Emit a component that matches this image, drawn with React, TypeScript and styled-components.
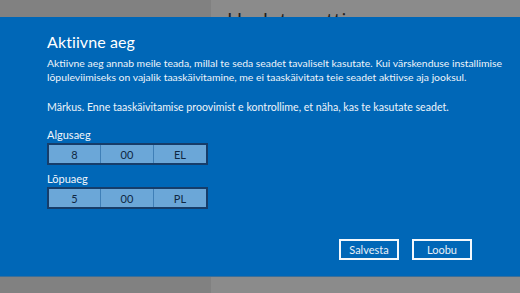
import styled, { createGlobalStyle } from 'styled-components'

const GlobalStyle = createGlobalStyle`
  html, body {
    margin: 0;
    padding: 0;
    width: 520px;
    height: 293px;
    overflow: hidden;
    font-family: Lato, 'Noto Sans', sans-serif;
  }
`

const Page = styled.div`
  width: 520px;
  height: 293px;
  display: flex;
  flex-direction: column;
`

const Strip = styled.div<{ $height?: number }>`
  display: grid;
  grid-template-columns: 211px 1fr;
  flex: ${p => (p.$height ? `0 0 ${p.$height}px` : '1 1 auto')};
  overflow: hidden;
`

const Side = styled.div`
  background: #818181;
`

const Pane = styled.div`
  background: #8b8b8b;
  padding-left: 16px;
  overflow: hidden;
`

const PaneTitle = styled.div`
  font-family: 'Open Sans', sans-serif;
  font-size: 21px;
  color: #1e1e1e;
  line-height: 1;
  margin-top: 11px;
  white-space: nowrap;
`

const Dialog = styled.div`
  flex: 0 0 260px;
  background: #0067b7;
  border-bottom: 1px solid #3a6f9a;
  box-sizing: border-box;
  padding: 14px 30px 0 47px;
  display: flex;
  flex-direction: column;
  color: #fff;
`

const Title = styled.h1`
  margin: 0;
  font-size: 16px;
  font-weight: 400;
  line-height: 22px;
  letter-spacing: 0.1px;
`

const Body = styled.p<{ $gap: number; $size: number }>`
  margin: ${p => p.$gap}px 0 0;
  font-size: ${p => p.$size}px;
  line-height: 14px;
  color: #eef4fa;
  white-space: nowrap;
`

const Field = styled.div<{ $gap: number }>`
  display: flex;
  flex-direction: column;
  margin-top: ${p => p.$gap}px;
`

const Label = styled.div`
  font-size: 11px;
  line-height: 14px;
  color: #f2f6fb;
  margin-bottom: 1px;
`

const TimeBox = styled.div`
  display: grid;
  grid-template-columns: 52px 53px 1fr;
  width: 161px;
  height: 22px;
  box-sizing: border-box;
  border: 2px solid #163d6a;
  background: #6ba7d8;
`

const TimeCell = styled.div<{ $last?: boolean }>`
  display: flex;
  align-items: center;
  justify-content: center;
  font-size: 11px;
  color: #0f2742;
  border-right: ${p => (p.$last ? 'none' : '1px solid #3f7fb7')};
`

const Actions = styled.div`
  display: flex;
  justify-content: flex-end;
  gap: 13px;
  margin-top: 30px;
  margin-right: 18px;
`

const Button = styled.button`
  width: 60px;
  height: 21px;
  box-sizing: border-box;
  border: 2px solid #f4f8fc;
  background: transparent;
  color: #e8f0f8;
  font-family: Lato, sans-serif;
  font-size: 11px;
  padding: 0;
`

type TimeProps = { label: string; hour: string; minute: string; ampm: string; gap: number }

const TimeField = ({ label, hour, minute, ampm, gap }: TimeProps) => (
  <Field $gap={gap}>
    <Label>{label}</Label>
    <TimeBox>
      <TimeCell>{hour}</TimeCell>
      <TimeCell>{minute}</TimeCell>
      <TimeCell $last>{ampm}</TimeCell>
    </TimeBox>
  </Field>
)

export default function App() {
  return (
    <Page>
      <GlobalStyle />
      <Strip $height={17}>
        <Side />
        <Pane>
          <PaneTitle>Update settings</PaneTitle>
        </Pane>
      </Strip>
      <Dialog>
        <Title>Aktiivne aeg</Title>
        <Body $gap={3} $size={10.4}>
          Aktiivne aeg annab meile teada, millal te seda seadet tavaliselt kasutate. Kui värskenduse installimise
          <br />
          lõpuleviimiseks on vajalik taaskäivitamine, me ei taaskäivitata teie seadet aktiivse aja jooksul.
        </Body>
        <Body $gap={16} $size={10.6}>
          Märkus. Enne taaskäivitamise proovimist e kontrollime, et näha, kas te kasutate seadet.
        </Body>
        <TimeField label="Algusaeg" hour="8" minute="00" ampm="EL" gap={14} />
        <TimeField label="Lõpuaeg" hour="5" minute="00" ampm="PL" gap={7} />
        <Actions>
          <Button>Salvesta</Button>
          <Button>Loobu</Button>
        </Actions>
      </Dialog>
      <Strip>
        <Side />
        <Pane />
      </Strip>
    </Page>
  )
}
